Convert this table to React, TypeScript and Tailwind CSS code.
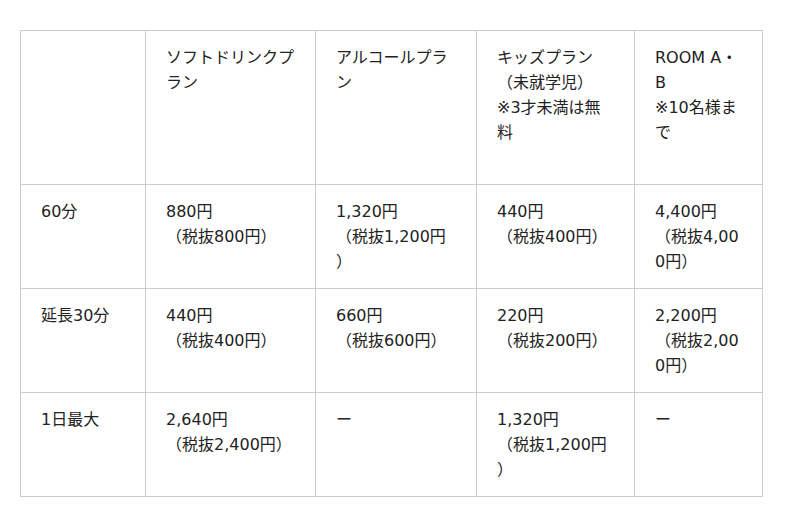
const font = { fontFamily: '"DejaVu Sans", "Noto Sans CJK JP", sans-serif' };

type Row = { label: string; cells: React.ReactNode[] };

const rows: Row[] = [
  {
    label: '60分',
    cells: [
      <>880円<br />（税抜800円）</>,
      <>1,320円<br />（税抜1,200円）</>,
      <>440円<br />（税抜400円）</>,
      <>4,400円<br />（税抜4,000円）</>,
    ],
  },
  {
    label: '延長30分',
    cells: [
      <>440円<br />（税抜400円）</>,
      <>660円<br />（税抜600円）</>,
      <>220円<br />（税抜200円）</>,
      <>2,200円<br />（税抜2,000円）</>,
    ],
  },
  {
    label: '1日最大',
    cells: [
      <>2,640円<br />（税抜2,400円）</>,
      <>ー</>,
      <>1,320円<br />（税抜1,200円）</>,
      <>ー</>,
    ],
  },
];

// narrower text box in the middle two columns, like the original page
const padRight = ['pr-[20px]', 'pr-[20px]', 'pr-[26px]', 'pr-[26px]', 'pr-[20px]'];

const cell = 'border border-[#cccccc] align-top pl-[20px] py-[14px] [line-break:anywhere]';

export default function App() {
  return (
    <div className="min-h-screen bg-white pl-[20px] pt-[30px]" style={font}>
      <table className="table-fixed border-collapse w-[742px] text-[16px] leading-[25px] text-[#222222]">
        <colgroup>
          <col className="w-[125px]" />
          <col className="w-[170px]" />
          <col className="w-[161px]" />
          <col className="w-[158px]" />
          <col className="w-[128px]" />
        </colgroup>
        <thead>
          <tr>
            <th className={`${cell} ${padRight[0]} pb-[39px] font-normal text-left`}></th>
            <th className={`${cell} ${padRight[1]} pb-[39px] font-normal text-left`}>ソフトドリンクプラン</th>
            <th className={`${cell} ${padRight[2]} pb-[39px] font-normal text-left`}>アルコールプラン</th>
            <th className={`${cell} ${padRight[3]} pb-[39px] font-normal text-left`}>
              キッズプラン
              <br />
              （未就学児）
              <br />
              ※3才未満は無料
            </th>
            <th className={`${cell} ${padRight[4]} pb-[39px] font-normal text-left`}>
              ROOM A・B
              <br />
              ※10名様まで
            </th>
          </tr>
        </thead>
        <tbody>
          {rows.map((row) => (
            <tr key={row.label}>
              <td className={`${cell} ${padRight[0]}`}>{row.label}</td>
              {row.cells.map((c, i) => (
                <td key={i} className={`${cell} ${padRight[i + 1]}`}>
                  {c}
                </td>
              ))}
            </tr>
          ))}
        </tbody>
      </table>
    </div>
  );
}
